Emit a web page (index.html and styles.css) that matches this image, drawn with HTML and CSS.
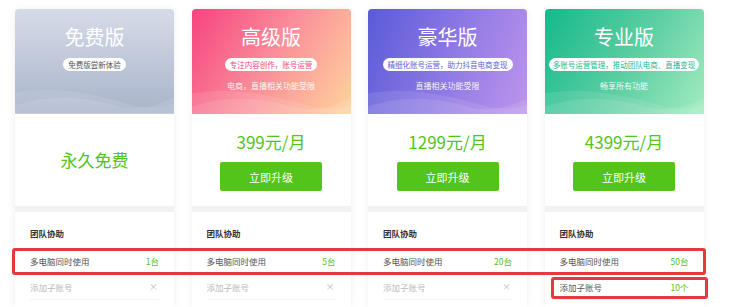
FILE: index.html
```html
<!DOCTYPE html>
<html lang="zh-CN">
<head>
<meta charset="utf-8">
<title>版本对比</title>
<link rel="stylesheet" href="styles.css">
</head>
<body>
<div class="plans">
  <div class="plan">
    <div class="head head-free">
      <div class="title">免费版</div>
      <div class="pill">免费版尝新体验</div>
      <div class="sub"></div>
      <svg class="wave" viewBox="0 0 160 30" preserveAspectRatio="none"><path d="M0 8 C40 0 80 10 120 22 C135 26 150 24 160 20 L160 30 L0 30Z"/><path d="M0 22 C30 12 60 10 100 22 C125 30 145 20 160 14 L160 30 L0 30Z"/></svg>
    </div>
    <div class="price-box"><div class="free">永久免费</div></div>
    <div class="features">
      <div class="ftitle">团队协助</div>
      <div class="row"><span>多电脑同时使用</span><span class="val">1台</span></div>
      <div class="row off"><span>添加子账号</span><span class="x">×</span></div>
    </div>
  </div>
  <div class="plan">
    <div class="head head-adv">
      <div class="title">高级版</div>
      <div class="pill pill-adv">专注内容创作，账号运营</div>
      <div class="sub">电商，直播相关功能受限</div>
      <svg class="wave" viewBox="0 0 160 30" preserveAspectRatio="none"><path d="M0 8 C40 0 80 10 120 22 C135 26 150 24 160 20 L160 30 L0 30Z"/><path d="M0 22 C30 12 60 10 100 22 C125 30 145 20 160 14 L160 30 L0 30Z"/></svg>
    </div>
    <div class="price-box"><div class="price">399元/月</div><button class="btn">立即升级</button></div>
    <div class="features">
      <div class="ftitle">团队协助</div>
      <div class="row"><span>多电脑同时使用</span><span class="val">5台</span></div>
      <div class="row off"><span>添加子账号</span><span class="x">×</span></div>
    </div>
  </div>
  <div class="plan">
    <div class="head head-lux">
      <div class="title">豪华版</div>
      <div class="pill pill-lux">精细化账号运营，助力抖音电商变现</div>
      <div class="sub">直播相关功能受限</div>
      <svg class="wave" viewBox="0 0 160 30" preserveAspectRatio="none"><path d="M0 8 C40 0 80 10 120 22 C135 26 150 24 160 20 L160 30 L0 30Z"/><path d="M0 22 C30 12 60 10 100 22 C125 30 145 20 160 14 L160 30 L0 30Z"/></svg>
    </div>
    <div class="price-box"><div class="price">1299元/月</div><button class="btn">立即升级</button></div>
    <div class="features">
      <div class="ftitle">团队协助</div>
      <div class="row"><span>多电脑同时使用</span><span class="val">20台</span></div>
      <div class="row off"><span>添加子账号</span><span class="x">×</span></div>
    </div>
  </div>
  <div class="plan">
    <div class="head head-pro">
      <div class="title">专业版</div>
      <div class="pill pill-pro">多账号运营管理，推动团队电商、直播变现</div>
      <div class="sub">畅享所有功能</div>
      <svg class="wave" viewBox="0 0 160 30" preserveAspectRatio="none"><path d="M0 8 C40 0 80 10 120 22 C135 26 150 24 160 20 L160 30 L0 30Z"/><path d="M0 22 C30 12 60 10 100 22 C125 30 145 20 160 14 L160 30 L0 30Z"/></svg>
    </div>
    <div class="price-box"><div class="price">4399元/月</div><button class="btn">立即升级</button></div>
    <div class="features">
      <div class="ftitle">团队协助</div>
      <div class="row"><span>多电脑同时使用</span><span class="val">50台</span></div>
      <div class="row"><span>添加子账号</span><span class="val">10个</span></div>
    </div>
  </div>
  <div class="mark mark-row"></div>
  <div class="mark mark-sub"></div>
</div>
</body>
</html>
```

FILE: styles.css
```css
* { box-sizing: border-box; }
html, body { margin: 0; padding: 0; background: #fff; overflow: hidden; }
body {
  font-family: "Noto Sans CJK SC", "Noto Sans", sans-serif;
  width: 750px;
  height: 307px;
}
.plans {
  position: relative;
  display: grid;
  grid-template-columns: repeat(4, 159px);
  column-gap: 17.5px;
  padding: 9px 0 0 15px;
}
.plan {
  display: flex;
  flex-direction: column;
  background: #f2f2f2;
  border-radius: 4px 4px 0 0;
  box-shadow: 0 0 8px rgba(0, 0, 0, 0.07);
}
.head {
  position: relative;
  height: 105px;
  border-radius: 4px 4px 0 0;
  overflow: hidden;
  display: flex;
  flex-direction: column;
  align-items: center;
  color: #fff;
  padding-top: 16px;
}
.head-free { background: linear-gradient(180deg, #d6dbe7 0%, #a9b4cb 100%); border-bottom: 1px solid #c3cbdc; }
.head-adv { background: linear-gradient(120deg, #f6437f 0%, #fb8f9a 50%, #fed49c 100%); }
.head-lux { background: linear-gradient(110deg, #5a5bd8 0%, #8d78e4 50%, #bd95ec 100%); }
.head-pro { background: linear-gradient(120deg, #14b98b 0%, #5fcfa4 55%, #a2ecbf 100%); }
.title {
  font-size: 20px;
  line-height: 24px;
  position: relative;
  z-index: 1;
}
.pill {
  position: relative;
  z-index: 1;
  margin-top: 9px;
  height: 13px;
  line-height: 13px;
  padding: 0 5px;
  font-size: 7.5px;
  white-space: nowrap;
  background: #fff;
  color: #555;
  border-radius: 7px;
}
.pill-adv { color: #f0497e; }
.pill-lux { color: #5e5fd8; }
.pill-pro { color: #1ab98c; padding: 0 4px; }
.sub {
  position: relative;
  z-index: 1;
  margin-top: 9px;
  height: 12px;
  line-height: 12px;
  font-size: 8px;
  color: rgba(255, 255, 255, 0.92);
  white-space: nowrap;
}
.wave {
  position: absolute;
  left: 0;
  bottom: 0;
  width: 100%;
  height: 28px;
}
.wave path { fill: rgba(255, 255, 255, 0.1); }
.price-box {
  height: 92px;
  background: #fff;
  display: flex;
  flex-direction: column;
  align-items: center;
  justify-content: flex-start;
  padding-top: 16px;
}
.free {
  margin-top: 18px;
  font-size: 17px;
  line-height: 24px;
  color: #52c41a;
}
.price {
  font-size: 17px;
  line-height: 24px;
  color: #52c41a;
}
.btn {
  margin-top: 8px;
  width: 102px;
  height: 29px;
  border: none;
  border-radius: 2px;
  background: #52c41a;
  color: #fff;
  font-family: inherit;
  font-size: 11px;
  padding: 0;
}
.features {
  margin-top: 6px;
  background: #fff;
  padding: 0 15px;
  height: 95px;
}
.ftitle {
  padding-top: 11px;
  line-height: 20px;
  height: 37px;
  font-size: 8.5px;
  font-weight: bold;
  color: #333;
}
.row {
  display: flex;
  justify-content: space-between;
  align-items: center;
  height: 25.5px;
  font-size: 8.5px;
  color: #555;
  border-bottom: 1px solid #f3f3f3;
}
.row.off { color: #bbb; }
.val { color: #52c41a; }
.x { color: #bbb; font-size: 9px; padding-right: 1px; }
.mark {
  position: absolute;
  border: 3px solid #e5393f;
  border-radius: 3px;
}
.mark-row { left: 12px; top: 248px; width: 694px; height: 27px; }
.mark-sub { left: 551px; top: 277px; width: 157px; height: 22px; }
```
